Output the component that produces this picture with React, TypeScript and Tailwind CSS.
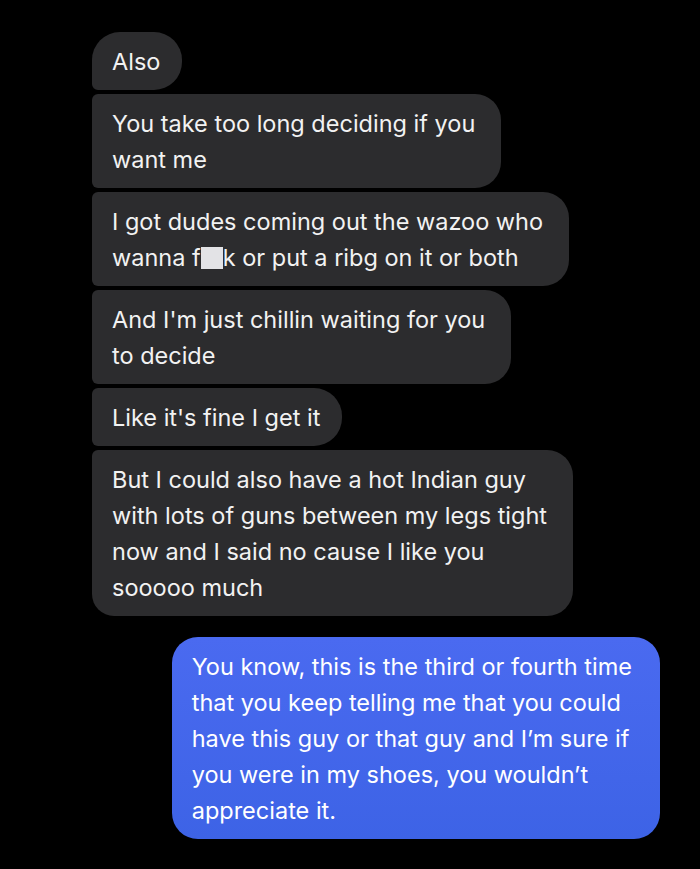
const font = { fontFamily: "Inter, 'Noto Sans', sans-serif" };

type Msg = { lines: React.ReactNode[]; corner: string };

const incoming: Msg[] = [
  { lines: ["Also"], corner: "rounded-[28px] rounded-bl-[6px] pr-[22px]" },
  {
    lines: ["You take too long deciding if you", "want me"],
    corner: "rounded-r-[26px] rounded-l-[6px] pr-[26px]",
  },
  {
    lines: [
      "I got dudes coming out the wazoo who",
      <>
        wanna f
        <span className="inline-block w-[22px] h-[22px] align-[-3px] bg-[#e3e3e6]" />
        k or put a ribg on it or both
      </>,
    ],
    corner: "rounded-r-[26px] rounded-l-[6px] pr-[26px]",
  },
  {
    lines: ["And I'm just chillin waiting for you", "to decide"],
    corner: "rounded-r-[26px] rounded-l-[6px] pr-[26px]",
  },
  { lines: ["Like it's fine I get it"], corner: "rounded-r-[28px] rounded-l-[6px] pr-[22px]" },
  {
    lines: [
      "But I could also have a hot Indian guy",
      "with lots of guns between my legs tight",
      "now and I said no cause I like you",
      "sooooo much",
    ],
    corner: "rounded-r-[26px] rounded-tl-[6px] rounded-bl-[22px] pr-[26px]",
  },
];

const outgoing = [
  "You know, this is the third or fourth time",
  "that you keep telling me that you could",
  "have this guy or that guy and I\u2019m sure if",
  "you were in my shoes, you wouldn\u2019t",
  "appreciate it.",
];

export default function App() {
  return (
    <div className="w-[700px] h-[869px] bg-black overflow-hidden" style={font}>
      <div className="flex flex-col items-start gap-[4px] pl-[92px] pt-[32px]">
        {incoming.map((m, i) => (
          <div
            key={i}
            className={`bg-[#2c2c2e] text-[#f2f2f2] text-[23.5px] leading-[36px] pl-[20px] pt-[12px] pb-[10px] ${m.corner}`}
          >
            {m.lines.map((l, j) => (
              <div key={j} className="whitespace-nowrap">
                {l}
              </div>
            ))}
          </div>
        ))}
      </div>
      <div className="flex justify-end pr-[40px] pt-[21px]">
        <div className="bg-gradient-to-b from-[#4a6af0] to-[#3d63e6] text-white text-[23.5px] leading-[36px] pl-[20px] pr-[28px] pt-[12px] pb-[10px] rounded-[26px]">
          {outgoing.map((l, j) => (
            <div key={j} className="whitespace-nowrap">
              {l}
            </div>
          ))}
        </div>
      </div>
    </div>
  );
}
